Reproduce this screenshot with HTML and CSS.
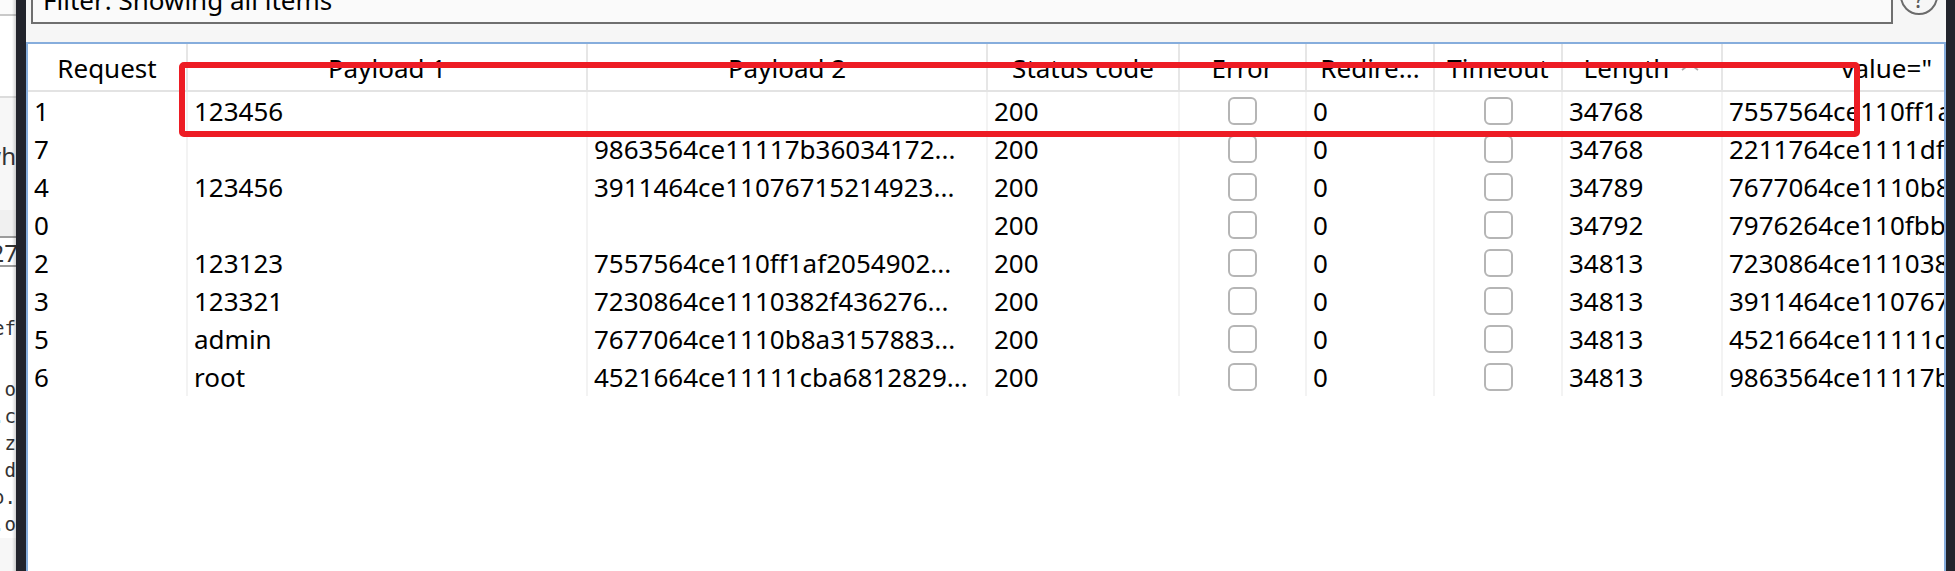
FILE: index.html
```html
<!DOCTYPE html>
<html>
<head>
<meta charset="utf-8">
<title>Intruder results</title>
<link rel="stylesheet" href="styles.css">
</head>
<body>
<div class="screen">
  <aside class="bgwin">
    <div class="bg-inner">
      <div class="bg-band bg-top"></div>
      <div class="bg-band bg-mid"></div>
      <div class="bg-line bg-wh">Somewh</div>
      <div class="bg-band bg-gap"></div>
      <div class="bg-field">127</div>
      <div class="bg-code">
        <div class="bg-cl bg-cl-first">ref</div>
        <div class="bg-cl">o</div>
        <div class="bg-cl">.c</div>
        <div class="bg-cl">z</div>
        <div class="bg-cl">d</div>
        <div class="bg-cl">o.</div>
        <div class="bg-cl">.o</div>
      </div>
    </div>
  </aside>
  <div class="frame"></div>
  <main class="win">
    <div class="toolbar">
      <div class="filter">Filter: Showing all items</div>
      <div class="help">?</div>
    </div>
    <div class="table">
      <div class="thead">
        <div class="th">Request</div>
        <div class="th">Payload 1</div>
        <div class="th">Payload 2</div>
        <div class="th">Status code</div>
        <div class="th">Error</div>
        <div class="th">Redire...</div>
        <div class="th">Timeout</div>
        <div class="th">Length<svg class="sort" width="20" height="10" viewBox="0 0 20 10"><polyline points="2,8 10,2 18,8" fill="none" stroke="#a9a9a9" stroke-width="1.6"/></svg></div>
        <div class="th th-right">value="</div>
      </div>
      <div class="tbody">
        <div class="tr">
          <div class="td">1</div><div class="td">123456</div><div class="td"></div><div class="td">200</div>
          <div class="td td-cb"><span class="cb"></span></div><div class="td">0</div><div class="td td-cb"><span class="cb"></span></div>
          <div class="td">34768</div><div class="td td-clip">7557564ce110ff1af2054902b3c7d</div>
        </div>
        <div class="tr">
          <div class="td">7</div><div class="td"></div><div class="td">9863564ce11117b36034172...</div><div class="td">200</div>
          <div class="td td-cb"><span class="cb"></span></div><div class="td">0</div><div class="td td-cb"><span class="cb"></span></div>
          <div class="td">34768</div><div class="td td-clip">2211764ce1111df6a2b09e1c4d</div>
        </div>
        <div class="tr">
          <div class="td">4</div><div class="td">123456</div><div class="td">3911464ce11076715214923...</div><div class="td">200</div>
          <div class="td td-cb"><span class="cb"></span></div><div class="td">0</div><div class="td td-cb"><span class="cb"></span></div>
          <div class="td">34789</div><div class="td td-clip">7677064ce1110b8a3157883a</div>
        </div>
        <div class="tr">
          <div class="td">0</div><div class="td"></div><div class="td"></div><div class="td">200</div>
          <div class="td td-cb"><span class="cb"></span></div><div class="td">0</div><div class="td td-cb"><span class="cb"></span></div>
          <div class="td">34792</div><div class="td td-clip">7976264ce110fbb5e21c7d90</div>
        </div>
        <div class="tr">
          <div class="td">2</div><div class="td">123123</div><div class="td">7557564ce110ff1af2054902...</div><div class="td">200</div>
          <div class="td td-cb"><span class="cb"></span></div><div class="td">0</div><div class="td td-cb"><span class="cb"></span></div>
          <div class="td">34813</div><div class="td td-clip">7230864ce1110382f436276b</div>
        </div>
        <div class="tr">
          <div class="td">3</div><div class="td">123321</div><div class="td">7230864ce1110382f436276...</div><div class="td">200</div>
          <div class="td td-cb"><span class="cb"></span></div><div class="td">0</div><div class="td td-cb"><span class="cb"></span></div>
          <div class="td">34813</div><div class="td td-clip">3911464ce11076715214923a</div>
        </div>
        <div class="tr">
          <div class="td">5</div><div class="td">admin</div><div class="td">7677064ce1110b8a3157883...</div><div class="td">200</div>
          <div class="td td-cb"><span class="cb"></span></div><div class="td">0</div><div class="td td-cb"><span class="cb"></span></div>
          <div class="td">34813</div><div class="td td-clip">4521664ce11111cba6812829</div>
        </div>
        <div class="tr">
          <div class="td">6</div><div class="td">root</div><div class="td">4521664ce11111cba6812829...</div><div class="td">200</div>
          <div class="td td-cb"><span class="cb"></span></div><div class="td">0</div><div class="td td-cb"><span class="cb"></span></div>
          <div class="td">34813</div><div class="td td-clip">9863564ce11117b36034172a</div>
        </div>
      </div>
    </div>
    <div class="annot"></div>
  </main>
  <div class="frame frame-right"></div>
</div>
</body>
</html>
```

FILE: styles.css
```css
* { box-sizing: border-box; }
html, body { margin: 0; padding: 0; }
body {
  width: 1955px;
  height: 571px;
  overflow: hidden;
  background: #ffffff;
  font-family: "Noto Sans", "Open Sans", sans-serif;
  color: #000000;
}
.screen { display: flex; height: 571px; }

/* background window peeking on the left */
.bgwin {
  width: 16px;
  flex: none;
  overflow: hidden;
  background: #f7f7f7;
  position: relative;
}
.bgwin::after {
  content: "";
  position: absolute;
  top: 0; right: 0; bottom: 0;
  width: 4px;
  background: linear-gradient(to right, rgba(0,0,0,0), rgba(0,0,0,0.18));
}
.bg-inner {
  width: 200px;
  margin-left: -184px;
  text-align: right;
  color: #333333;
  font-family: "DejaVu Sans Mono", monospace;
  font-size: 19px;
}
.bg-band { width: 100%; }
.bg-top { height: 16px; background: #fbfbfb; border-bottom: 2px solid #c9c9c9; }
.bg-mid { height: 82px; background: #ffffff; border-bottom: 2px solid #dcdcdc; }
.bg-line { height: 112px; line-height: 116px; font-family: "Noto Sans", sans-serif; font-size: 24px; background: #f7f7f7; }
.bg-gap { height: 26px; background: #f0f0f0; }
.bg-field {
  height: 31px;
  line-height: 29px;
  border-top: 2px solid #9c9c9c;
  border-bottom: 2px solid #9c9c9c;
  background: #ffffff;
  font-family: "Noto Sans", sans-serif;
  font-size: 24px;
  margin-right: -2px;
}
.bg-code { padding-top: 48px; background: #ffffff; }
.bg-cl { height: 27px; line-height: 27px; }
.bg-cl-first { margin-bottom: 34px; }

.frame { width: 10px; flex: none; background: #22242c; }
.frame-right { width: 9px; }

/* main window */
.win {
  flex: 1;
  min-width: 0;
  position: relative;
  display: flex;
  flex-direction: column;
  background: #f6f6f6;
}
.toolbar {
  height: 42px;
  flex: none;
  display: flex;
  align-items: flex-start;
  padding-left: 5px;
}
.filter {
  flex: 1;
  height: 46px;
  margin-top: -22px;
  border: 2px solid #6f6f6f;
  background: #fafafa;
  font-size: 26px;
  line-height: 40px;
  padding-left: 10px;
  white-space: nowrap;
  overflow: hidden;
}
.help {
  flex: none;
  width: 38px;
  height: 38px;
  margin-top: -23px;
  margin-left: 7px;
  margin-right: 8px;
  border: 2px solid #6b6b6b;
  border-radius: 50%;
  color: #5a5a5a;
  font-size: 24px;
  line-height: 34px;
  padding-top: 3px;
  text-align: center;
}

.table {
  flex: 1;
  background: #ffffff;
  border: 2px solid #86addc;
  border-bottom: none;
  font-size: 26px;
}
.thead, .tr {
  display: grid;
  grid-template-columns: 160px 400px 400px 192px 127px 128px 128px 160px 1fr;
}
.thead { height: 48px; border-bottom: 2px solid #e3e3e3; }
.th {
  height: 46px;
  line-height: 48px;
  text-align: center;
  border-right: 2px solid #e6e6e6;
  white-space: nowrap;
  overflow: hidden;
}
.th:last-child { border-right: none; }
.th-right { text-align: right; padding-right: 12px; }
.sort { margin-left: 11px; vertical-align: 6px; }

.tr { height: 38px; }
.td {
  height: 38px;
  line-height: 38px;
  padding: 0 6px;
  border-right: 2px solid #f3f3f3;
  white-space: nowrap;
  overflow: hidden;
}
.td:last-child { border-right: none; }
.td-clip { text-overflow: clip; }
.td-cb { display: flex; align-items: center; justify-content: center; padding: 0; }
.cb {
  width: 29px;
  height: 28px;
  border: 2px solid #b5b5b5;
  border-radius: 6px;
  background: #ffffff;
}

/* red annotation rectangle drawn over the screenshot */
.annot {
  position: absolute;
  left: 153px;
  top: 62px;
  width: 1681px;
  height: 75px;
  border: 6px solid #ed1c24;
  border-radius: 5px;
  pointer-events: none;
}
```
